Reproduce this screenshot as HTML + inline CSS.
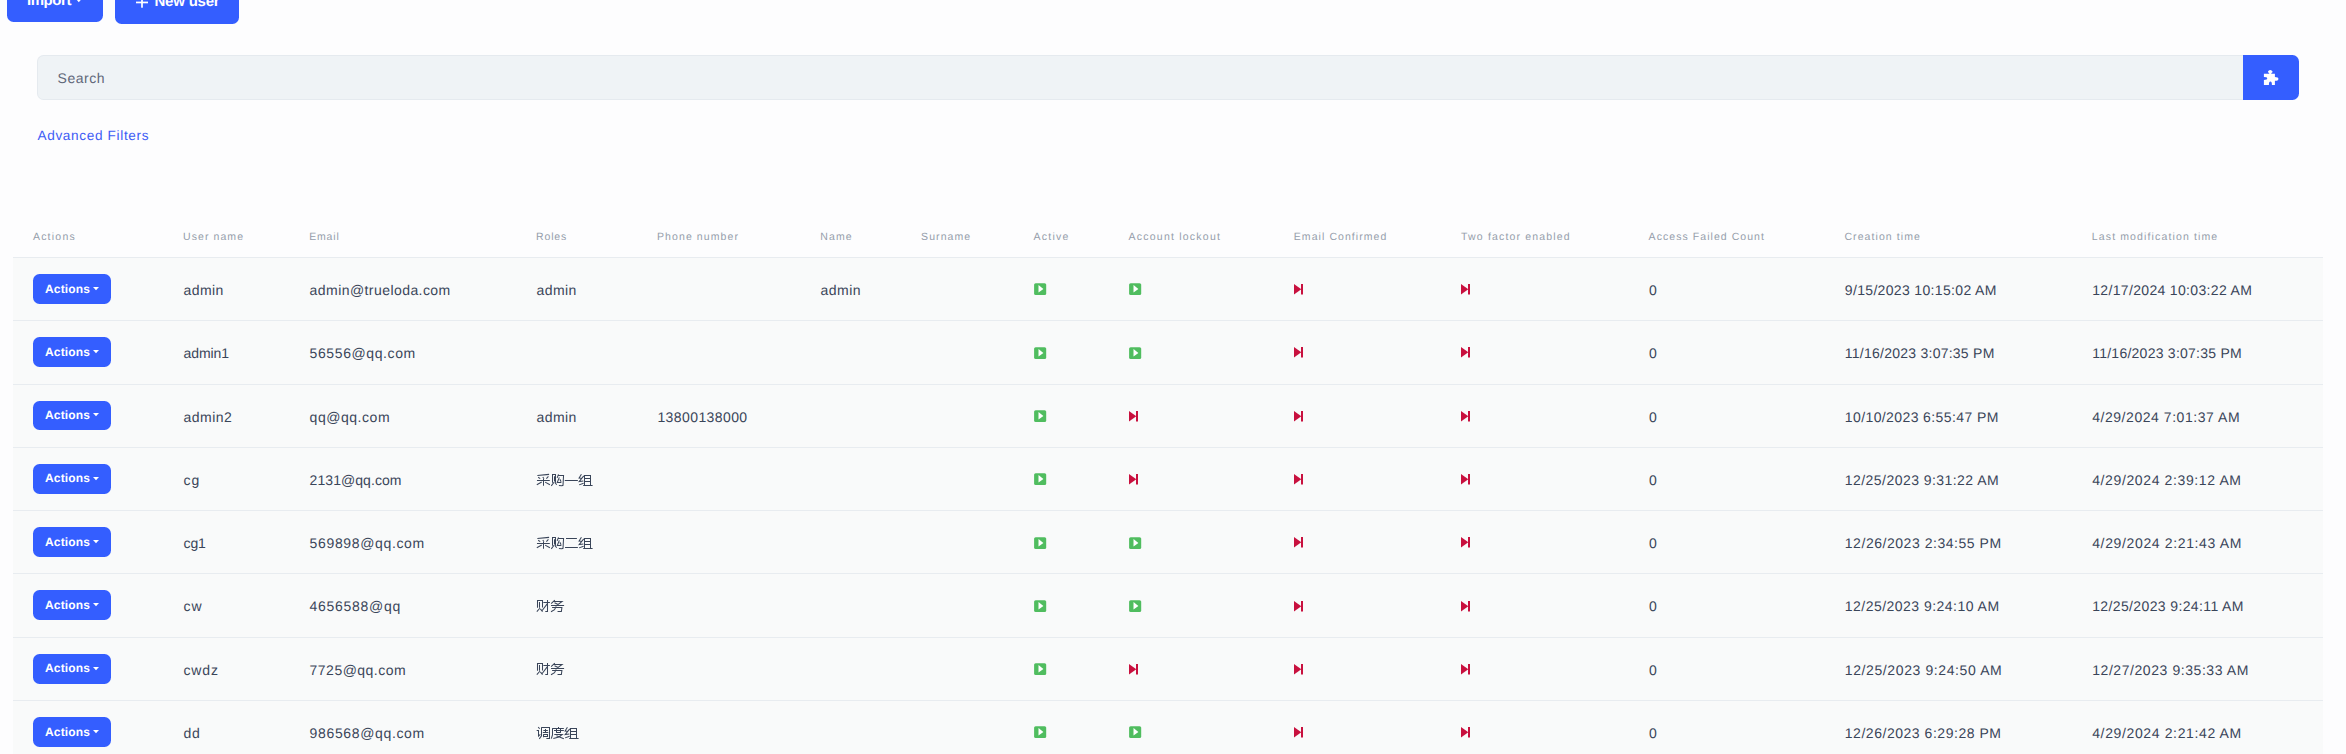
<!DOCTYPE html>
<html><head><meta charset="utf-8">
<style>
html,body{margin:0;padding:0;}
body{text-rendering:geometricPrecision;width:2346px;height:754px;overflow:hidden;position:relative;background:#fdfdfe;font-family:"Liberation Sans",sans-serif;}
.a{position:absolute;white-space:nowrap;}
.btn{position:absolute;background:#345eff;border-radius:6.5px;color:#fff;font-weight:bold;}
.hd{position:absolute;white-space:nowrap;font-size:10.5px;line-height:14px;letter-spacing:1.1px;color:#959dab;}
.td{position:absolute;white-space:nowrap;font-size:14px;line-height:20px;letter-spacing:0.35px;color:#3a4559;}
.ic{position:absolute;display:block;}
.row{position:absolute;left:13px;width:2310px;background:#f9fafa;}
.line{position:absolute;left:13px;width:2310px;height:1px;background:#e8ecf0;}
.caret{position:absolute;width:0;height:0;border-left:3px solid transparent;border-right:3px solid transparent;border-top:3px solid #fff;}
</style></head><body>

<div class="btn" style="left:7px;top:-14px;width:96px;height:36px;"></div>
<div class="a" style="left:27px;top:-8px;font-size:15px;line-height:18px;color:#fff;font-weight:bold;letter-spacing:-0.45px;">Import</div>
<svg class="ic" style="left:75.9px;top:-0.8px" width="6" height="4" viewBox="0 0 6 4"><path d="M0 0 H5.6 L2.8 3.2 Z" fill="#fff"/></svg>
<div class="btn" style="left:115px;top:-14px;width:124px;height:38px;"></div>
<svg class="ic" style="left:136px;top:-3.8px" width="12" height="12" viewBox="0 0 12 12"><rect x="0" y="5.6" width="12" height="1.7" fill="#fff"/><rect x="5.15" y="0" width="1.7" height="11.7" fill="#fff"/></svg>
<div class="a" style="left:154.5px;top:-7.1px;font-size:15px;line-height:18px;color:#fff;font-weight:bold;letter-spacing:-0.22px;">New user</div>
<div class="a" style="left:37px;top:55px;width:2206px;height:45px;box-sizing:border-box;background:#eff3f6;border:1px solid #e5eaef;border-right:0;border-radius:6.5px 0 0 6.5px;"></div>
<div class="a" style="left:57.6px;top:68px;font-size:14px;line-height:20px;letter-spacing:0.5px;color:#5f6779;">Search</div>
<div class="a" style="left:2243px;top:55px;width:56px;height:45px;background:#345eff;border-radius:0 6.5px 6.5px 0;"></div>
<svg class="ic" style="left:2262px;top:68px" width="20" height="20" viewBox="0 0 20 20"><path fill="#fff" d="M1.9 5.8 H7.18 V4.9 A2.15 1.5 0 1 1 9.32 4.9 V5.8 H12.9 V9.0 A3.5 1.9 0 0 1 12.9 12.8 V16.9 H9.9 A1.5 3.3 0 0 0 6.9 16.9 H1.9 V12 A3.3 1.45 0 0 0 1.9 9.1 Z"/></svg>
<div class="a" style="left:37.5px;top:125.8px;font-size:13.6px;line-height:20px;letter-spacing:0.65px;color:#3d5cf5;">Advanced Filters</div>
<div class="hd" style="left:32.90px;top:230.2px;letter-spacing:1.231px">Actions</div>
<div class="hd" style="left:183.10px;top:230.2px;letter-spacing:1.067px">User name</div>
<div class="hd" style="left:309.20px;top:230.2px;letter-spacing:0.819px">Email</div>
<div class="hd" style="left:536.10px;top:230.2px;letter-spacing:0.822px">Roles</div>
<div class="hd" style="left:657.00px;top:230.2px;letter-spacing:1.098px">Phone number</div>
<div class="hd" style="left:820.20px;top:230.2px;letter-spacing:1.135px">Name</div>
<div class="hd" style="left:921.10px;top:230.2px;letter-spacing:1.073px">Surname</div>
<div class="hd" style="left:1033.60px;top:230.2px;letter-spacing:1.251px">Active</div>
<div class="hd" style="left:1128.60px;top:230.2px;letter-spacing:1.225px">Account lockout</div>
<div class="hd" style="left:1293.80px;top:230.2px;letter-spacing:1.068px">Email Confirmed</div>
<div class="hd" style="left:1461.10px;top:230.2px;letter-spacing:1.168px">Two factor enabled</div>
<div class="hd" style="left:1648.60px;top:230.2px;letter-spacing:1.058px">Access Failed Count</div>
<div class="hd" style="left:1844.40px;top:230.2px;letter-spacing:1.080px">Creation time</div>
<div class="hd" style="left:2091.80px;top:230.2px;letter-spacing:1.134px">Last modification time</div>
<div class="row" style="top:257.00px;height:63.29px;"></div>
<div class="line" style="top:257px;"></div>
<div class="btn" style="left:33.2px;top:274.00px;width:77.7px;height:29.8px;"></div>
<div class="a" style="left:45px;top:278.60px;font-size:12px;line-height:20px;color:#fff;font-weight:bold;letter-spacing:0.15px;">Actions</div>
<svg class="ic" style="left:93.2px;top:286.80px" width="6" height="4" viewBox="0 0 6 4"><path d="M0 0 H6 L3 3.3 Z" fill="#fff"/></svg>
<div class="td" style="left:183.5px;top:280.00px;letter-spacing:0.444px">admin</div>
<div class="td" style="left:309.6px;top:280.00px;letter-spacing:0.434px">admin@trueloda.com</div>
<div class="td" style="left:536.5px;top:280.00px;letter-spacing:0.444px">admin</div>
<div class="td" style="left:820.6px;top:280.00px;letter-spacing:0.444px">admin</div>
<div class="td" style="left:1649px;top:280.00px;letter-spacing:1.047px">0</div>
<div class="td" style="left:1844.8px;top:280.00px;letter-spacing:0.338px">9/15/2023 10:15:02 AM</div>
<div class="td" style="left:2092.2px;top:280.00px;letter-spacing:0.338px">12/17/2024 10:03:22 AM</div>
<svg class="ic" style="left:1033.7px;top:283.4px" width="13" height="13" viewBox="0 0 13 13"><rect x="0.1" y="0.2" width="12.1" height="11.9" rx="1.6" fill="#50bd5f"/><path d="M4.5 2.0 L9.4 5.9 L4.5 9.6 Z" fill="#fff"/></svg>
<svg class="ic" style="left:1128.7px;top:283.4px" width="13" height="13" viewBox="0 0 13 13"><rect x="0.1" y="0.2" width="12.1" height="11.9" rx="1.6" fill="#50bd5f"/><path d="M4.5 2.0 L9.4 5.9 L4.5 9.6 Z" fill="#fff"/></svg>
<svg class="ic" style="left:1294.0px;top:284.1px" width="10" height="11" viewBox="0 0 10 11"><path d="M0 0 L7.3 5.25 L0 10.5 Z" fill="#c8103e"/><rect x="7.0" y="0" width="2.0" height="10.5" fill="#c8103e"/></svg>
<svg class="ic" style="left:1460.9px;top:284.1px" width="10" height="11" viewBox="0 0 10 11"><path d="M0 0 L7.3 5.25 L0 10.5 Z" fill="#c8103e"/><rect x="7.0" y="0" width="2.0" height="10.5" fill="#c8103e"/></svg>
<div class="row" style="top:320.29px;height:63.29px;"></div>
<div class="line" style="top:320px;"></div>
<div class="btn" style="left:33.2px;top:337.29px;width:77.7px;height:29.8px;"></div>
<div class="a" style="left:45px;top:341.89px;font-size:12px;line-height:20px;color:#fff;font-weight:bold;letter-spacing:0.15px;">Actions</div>
<svg class="ic" style="left:93.2px;top:350.09px" width="6" height="4" viewBox="0 0 6 4"><path d="M0 0 H6 L3 3.3 Z" fill="#fff"/></svg>
<div class="td" style="left:183.5px;top:343.29px;letter-spacing:-0.070px">admin1</div>
<div class="td" style="left:309.6px;top:343.29px;letter-spacing:0.600px">56556@qq.com</div>
<div class="td" style="left:1649px;top:343.29px;letter-spacing:1.047px">0</div>
<div class="td" style="left:1844.8px;top:343.29px;letter-spacing:0.249px">11/16/2023 3:07:35 PM</div>
<div class="td" style="left:2092.2px;top:343.29px;letter-spacing:0.249px">11/16/2023 3:07:35 PM</div>
<svg class="ic" style="left:1033.7px;top:346.69px" width="13" height="13" viewBox="0 0 13 13"><rect x="0.1" y="0.2" width="12.1" height="11.9" rx="1.6" fill="#50bd5f"/><path d="M4.5 2.0 L9.4 5.9 L4.5 9.6 Z" fill="#fff"/></svg>
<svg class="ic" style="left:1128.7px;top:346.69px" width="13" height="13" viewBox="0 0 13 13"><rect x="0.1" y="0.2" width="12.1" height="11.9" rx="1.6" fill="#50bd5f"/><path d="M4.5 2.0 L9.4 5.9 L4.5 9.6 Z" fill="#fff"/></svg>
<svg class="ic" style="left:1294.0px;top:347.39000000000004px" width="10" height="11" viewBox="0 0 10 11"><path d="M0 0 L7.3 5.25 L0 10.5 Z" fill="#c8103e"/><rect x="7.0" y="0" width="2.0" height="10.5" fill="#c8103e"/></svg>
<svg class="ic" style="left:1460.9px;top:347.39000000000004px" width="10" height="11" viewBox="0 0 10 11"><path d="M0 0 L7.3 5.25 L0 10.5 Z" fill="#c8103e"/><rect x="7.0" y="0" width="2.0" height="10.5" fill="#c8103e"/></svg>
<div class="row" style="top:383.58px;height:63.29px;"></div>
<div class="line" style="top:384px;"></div>
<div class="btn" style="left:33.2px;top:400.58px;width:77.7px;height:29.8px;"></div>
<div class="a" style="left:45px;top:405.18px;font-size:12px;line-height:20px;color:#fff;font-weight:bold;letter-spacing:0.15px;">Actions</div>
<svg class="ic" style="left:93.2px;top:413.38px" width="6" height="4" viewBox="0 0 6 4"><path d="M0 0 H6 L3 3.3 Z" fill="#fff"/></svg>
<div class="td" style="left:183.5px;top:406.58px;letter-spacing:0.497px">admin2</div>
<div class="td" style="left:309.6px;top:406.58px;letter-spacing:0.533px">qq@qq.com</div>
<div class="td" style="left:536.5px;top:406.58px;letter-spacing:0.444px">admin</div>
<div class="td" style="left:657.4px;top:406.58px;letter-spacing:0.411px">13800138000</div>
<div class="td" style="left:1649px;top:406.58px;letter-spacing:1.047px">0</div>
<div class="td" style="left:1844.8px;top:406.58px;letter-spacing:0.397px">10/10/2023 6:55:47 PM</div>
<div class="td" style="left:2092.2px;top:406.58px;letter-spacing:0.545px">4/29/2024 7:01:37 AM</div>
<svg class="ic" style="left:1033.7px;top:409.97999999999996px" width="13" height="13" viewBox="0 0 13 13"><rect x="0.1" y="0.2" width="12.1" height="11.9" rx="1.6" fill="#50bd5f"/><path d="M4.5 2.0 L9.4 5.9 L4.5 9.6 Z" fill="#fff"/></svg>
<svg class="ic" style="left:1128.8px;top:410.68px" width="10" height="11" viewBox="0 0 10 11"><path d="M0 0 L7.3 5.25 L0 10.5 Z" fill="#c8103e"/><rect x="7.0" y="0" width="2.0" height="10.5" fill="#c8103e"/></svg>
<svg class="ic" style="left:1294.0px;top:410.68px" width="10" height="11" viewBox="0 0 10 11"><path d="M0 0 L7.3 5.25 L0 10.5 Z" fill="#c8103e"/><rect x="7.0" y="0" width="2.0" height="10.5" fill="#c8103e"/></svg>
<svg class="ic" style="left:1460.9px;top:410.68px" width="10" height="11" viewBox="0 0 10 11"><path d="M0 0 L7.3 5.25 L0 10.5 Z" fill="#c8103e"/><rect x="7.0" y="0" width="2.0" height="10.5" fill="#c8103e"/></svg>
<div class="row" style="top:446.87px;height:63.29px;"></div>
<div class="line" style="top:447px;"></div>
<div class="btn" style="left:33.2px;top:463.87px;width:77.7px;height:29.8px;"></div>
<div class="a" style="left:45px;top:468.47px;font-size:12px;line-height:20px;color:#fff;font-weight:bold;letter-spacing:0.15px;">Actions</div>
<svg class="ic" style="left:93.2px;top:476.67px" width="6" height="4" viewBox="0 0 6 4"><path d="M0 0 H6 L3 3.3 Z" fill="#fff"/></svg>
<div class="td" style="left:183.5px;top:469.87px;letter-spacing:0.898px">cg</div>
<div class="td" style="left:309.6px;top:469.87px;letter-spacing:0.060px">2131@qq.com</div>
<svg class="ic" style="left:533px;top:470px" width="62" height="20" viewBox="0 0 62 20"><path d="M4.36,5.59 L16.09,4.36 M5.18,7.23 L7.23,8.59 M9.82,6.96 L10.91,8.73 M15.41,6.41 L13.37,8.59 M3.96,10.50 L16.78,10.50 M10.50,9.00 L10.50,15.82 M8.73,12.00 L3.82,14.73 M12.14,12.14 L16.91,14.73 M19.50,4.36 L19.50,12.82 M19.09,4.50 L22.50,4.50 L22.50,12.41 M21.50,6.27 L21.50,11.46 M21.00,12.27 L18.28,15.82 M21.82,12.41 L23.73,14.73 M25.50,4.36 L24.14,7.91 M24.82,5.50 L30.55,5.50 L30.01,15.28 L28.91,15.68 L25.91,15.55 M26.32,7.36 L24.28,12.50 L28.37,12.50 M26.87,9.27 L28.10,11.73 M31.78,10.50 L44.87,10.50 M48.42,4.23 L46.10,8.05 L48.28,8.18 M50.74,5.86 L46.24,11.46 L50.33,10.91 M46.10,14.87 L50.60,13.23 M51.50,5.05 L51.50,15.41 M57.50,5.05 L57.50,15.41 M51.69,5.50 L57.28,5.50 M51.69,8.50 L57.28,8.50 M51.69,11.50 L57.28,11.50 M50.19,15.50 L59.60,15.50" fill="none" stroke="#3a4559" stroke-width="1.05" stroke-linejoin="miter"/></svg>
<div class="td" style="left:1649px;top:469.87px;letter-spacing:1.047px">0</div>
<div class="td" style="left:1844.8px;top:469.87px;letter-spacing:0.452px">12/25/2023 9:31:22 AM</div>
<div class="td" style="left:2092.2px;top:469.87px;letter-spacing:0.622px">4/29/2024 2:39:12 AM</div>
<svg class="ic" style="left:1033.7px;top:473.27px" width="13" height="13" viewBox="0 0 13 13"><rect x="0.1" y="0.2" width="12.1" height="11.9" rx="1.6" fill="#50bd5f"/><path d="M4.5 2.0 L9.4 5.9 L4.5 9.6 Z" fill="#fff"/></svg>
<svg class="ic" style="left:1128.8px;top:473.97px" width="10" height="11" viewBox="0 0 10 11"><path d="M0 0 L7.3 5.25 L0 10.5 Z" fill="#c8103e"/><rect x="7.0" y="0" width="2.0" height="10.5" fill="#c8103e"/></svg>
<svg class="ic" style="left:1294.0px;top:473.97px" width="10" height="11" viewBox="0 0 10 11"><path d="M0 0 L7.3 5.25 L0 10.5 Z" fill="#c8103e"/><rect x="7.0" y="0" width="2.0" height="10.5" fill="#c8103e"/></svg>
<svg class="ic" style="left:1460.9px;top:473.97px" width="10" height="11" viewBox="0 0 10 11"><path d="M0 0 L7.3 5.25 L0 10.5 Z" fill="#c8103e"/><rect x="7.0" y="0" width="2.0" height="10.5" fill="#c8103e"/></svg>
<div class="row" style="top:510.16px;height:63.29px;"></div>
<div class="line" style="top:510px;"></div>
<div class="btn" style="left:33.2px;top:527.16px;width:77.7px;height:29.8px;"></div>
<div class="a" style="left:45px;top:531.76px;font-size:12px;line-height:20px;color:#fff;font-weight:bold;letter-spacing:0.15px;">Actions</div>
<svg class="ic" style="left:93.2px;top:539.96px" width="6" height="4" viewBox="0 0 6 4"><path d="M0 0 H6 L3 3.3 Z" fill="#fff"/></svg>
<div class="td" style="left:183.5px;top:533.16px;letter-spacing:-0.099px">cg1</div>
<div class="td" style="left:309.6px;top:533.16px;letter-spacing:0.645px">569898@qq.com</div>
<svg class="ic" style="left:533px;top:533px" width="62" height="20" viewBox="0 0 62 20"><path d="M4.36,5.59 L16.09,4.36 M5.18,7.23 L7.23,8.59 M9.82,6.96 L10.91,8.73 M15.41,6.41 L13.37,8.59 M3.96,10.50 L16.78,10.50 M10.50,9.00 L10.50,15.82 M8.73,12.00 L3.82,14.73 M12.14,12.14 L16.91,14.73 M19.50,4.36 L19.50,12.82 M19.09,4.50 L22.50,4.50 L22.50,12.41 M21.50,6.27 L21.50,11.46 M21.00,12.27 L18.28,15.82 M21.82,12.41 L23.73,14.73 M25.50,4.36 L24.14,7.91 M24.82,5.50 L30.55,5.50 L30.01,15.28 L28.91,15.68 L25.91,15.55 M26.32,7.36 L24.28,12.50 L28.37,12.50 M26.87,9.27 L28.10,11.73 M33.01,5.50 L43.92,5.50 M32.05,14.50 L44.87,14.50 M48.42,4.23 L46.10,8.05 L48.28,8.18 M50.74,5.86 L46.24,11.46 L50.33,10.91 M46.10,14.87 L50.60,13.23 M51.50,5.05 L51.50,15.41 M57.50,5.05 L57.50,15.41 M51.69,5.50 L57.28,5.50 M51.69,8.50 L57.28,8.50 M51.69,11.50 L57.28,11.50 M50.19,15.50 L59.60,15.50" fill="none" stroke="#3a4559" stroke-width="1.05" stroke-linejoin="miter"/></svg>
<div class="td" style="left:1649px;top:533.16px;letter-spacing:1.047px">0</div>
<div class="td" style="left:1844.8px;top:533.16px;letter-spacing:0.539px">12/26/2023 2:34:55 PM</div>
<div class="td" style="left:2092.2px;top:533.16px;letter-spacing:0.640px">4/29/2024 2:21:43 AM</div>
<svg class="ic" style="left:1033.7px;top:536.56px" width="13" height="13" viewBox="0 0 13 13"><rect x="0.1" y="0.2" width="12.1" height="11.9" rx="1.6" fill="#50bd5f"/><path d="M4.5 2.0 L9.4 5.9 L4.5 9.6 Z" fill="#fff"/></svg>
<svg class="ic" style="left:1128.7px;top:536.56px" width="13" height="13" viewBox="0 0 13 13"><rect x="0.1" y="0.2" width="12.1" height="11.9" rx="1.6" fill="#50bd5f"/><path d="M4.5 2.0 L9.4 5.9 L4.5 9.6 Z" fill="#fff"/></svg>
<svg class="ic" style="left:1294.0px;top:537.26px" width="10" height="11" viewBox="0 0 10 11"><path d="M0 0 L7.3 5.25 L0 10.5 Z" fill="#c8103e"/><rect x="7.0" y="0" width="2.0" height="10.5" fill="#c8103e"/></svg>
<svg class="ic" style="left:1460.9px;top:537.26px" width="10" height="11" viewBox="0 0 10 11"><path d="M0 0 L7.3 5.25 L0 10.5 Z" fill="#c8103e"/><rect x="7.0" y="0" width="2.0" height="10.5" fill="#c8103e"/></svg>
<div class="row" style="top:573.45px;height:63.29px;"></div>
<div class="line" style="top:573px;"></div>
<div class="btn" style="left:33.2px;top:590.45px;width:77.7px;height:29.8px;"></div>
<div class="a" style="left:45px;top:595.05px;font-size:12px;line-height:20px;color:#fff;font-weight:bold;letter-spacing:0.15px;">Actions</div>
<svg class="ic" style="left:93.2px;top:603.25px" width="6" height="4" viewBox="0 0 6 4"><path d="M0 0 H6 L3 3.3 Z" fill="#fff"/></svg>
<div class="td" style="left:183.5px;top:596.45px;letter-spacing:1.039px">cw</div>
<div class="td" style="left:309.6px;top:596.45px;letter-spacing:0.713px">4656588@qq</div>
<svg class="ic" style="left:533px;top:596px" width="34" height="20" viewBox="0 0 34 20"><path d="M4.50,4.09 L4.50,11.73 M4.36,4.50 L9.50,4.50 L9.50,11.46 M6.50,6.00 L6.50,11.73 M6.82,12.27 L3.82,15.68 M7.36,12.82 L9.55,15.55 M10.37,6.50 L16.91,6.50 M14.50,4.09 L14.50,15.50 L12.27,15.50 M14.18,7.91 L9.00,14.73 M21.82,4.09 L18.14,7.64 M20.87,5.50 L29.05,5.50 L24.82,8.59 M21.55,6.82 L25.64,8.73 M18.00,9.50 L31.10,9.50 M19.09,11.50 L28.91,11.50 L28.37,15.50 L24.55,15.50 M23.19,10.37 L21.55,13.64 L18.00,15.68" fill="none" stroke="#3a4559" stroke-width="1.05" stroke-linejoin="miter"/></svg>
<div class="td" style="left:1649px;top:596.45px;letter-spacing:1.047px">0</div>
<div class="td" style="left:1844.8px;top:596.45px;letter-spacing:0.474px">12/25/2023 9:24:10 AM</div>
<div class="td" style="left:2092.2px;top:596.45px;letter-spacing:0.374px">12/25/2023 9:24:11 AM</div>
<svg class="ic" style="left:1033.7px;top:599.85px" width="13" height="13" viewBox="0 0 13 13"><rect x="0.1" y="0.2" width="12.1" height="11.9" rx="1.6" fill="#50bd5f"/><path d="M4.5 2.0 L9.4 5.9 L4.5 9.6 Z" fill="#fff"/></svg>
<svg class="ic" style="left:1128.7px;top:599.85px" width="13" height="13" viewBox="0 0 13 13"><rect x="0.1" y="0.2" width="12.1" height="11.9" rx="1.6" fill="#50bd5f"/><path d="M4.5 2.0 L9.4 5.9 L4.5 9.6 Z" fill="#fff"/></svg>
<svg class="ic" style="left:1294.0px;top:600.5500000000001px" width="10" height="11" viewBox="0 0 10 11"><path d="M0 0 L7.3 5.25 L0 10.5 Z" fill="#c8103e"/><rect x="7.0" y="0" width="2.0" height="10.5" fill="#c8103e"/></svg>
<svg class="ic" style="left:1460.9px;top:600.5500000000001px" width="10" height="11" viewBox="0 0 10 11"><path d="M0 0 L7.3 5.25 L0 10.5 Z" fill="#c8103e"/><rect x="7.0" y="0" width="2.0" height="10.5" fill="#c8103e"/></svg>
<div class="row" style="top:636.74px;height:63.29px;"></div>
<div class="line" style="top:637px;"></div>
<div class="btn" style="left:33.2px;top:653.74px;width:77.7px;height:29.8px;"></div>
<div class="a" style="left:45px;top:658.34px;font-size:12px;line-height:20px;color:#fff;font-weight:bold;letter-spacing:0.15px;">Actions</div>
<svg class="ic" style="left:93.2px;top:666.54px" width="6" height="4" viewBox="0 0 6 4"><path d="M0 0 H6 L3 3.3 Z" fill="#fff"/></svg>
<div class="td" style="left:183.5px;top:659.74px;letter-spacing:0.840px">cwdz</div>
<div class="td" style="left:309.6px;top:659.74px;letter-spacing:0.477px">7725@qq.com</div>
<svg class="ic" style="left:533px;top:659px" width="34" height="20" viewBox="0 0 34 20"><path d="M4.50,4.09 L4.50,11.73 M4.36,4.50 L9.50,4.50 L9.50,11.46 M6.50,6.00 L6.50,11.73 M6.82,12.27 L3.82,15.68 M7.36,12.82 L9.55,15.55 M10.37,6.50 L16.91,6.50 M14.50,4.09 L14.50,15.50 L12.27,15.50 M14.18,7.91 L9.00,14.73 M21.82,4.09 L18.14,7.64 M20.87,5.50 L29.05,5.50 L24.82,8.59 M21.55,6.82 L25.64,8.73 M18.00,9.50 L31.10,9.50 M19.09,11.50 L28.91,11.50 L28.37,15.50 L24.55,15.50 M23.19,10.37 L21.55,13.64 L18.00,15.68" fill="none" stroke="#3a4559" stroke-width="1.05" stroke-linejoin="miter"/></svg>
<div class="td" style="left:1649px;top:659.74px;letter-spacing:1.047px">0</div>
<div class="td" style="left:1844.8px;top:659.74px;letter-spacing:0.608px">12/25/2023 9:24:50 AM</div>
<div class="td" style="left:2092.2px;top:659.74px;letter-spacing:0.568px">12/27/2023 9:35:33 AM</div>
<svg class="ic" style="left:1033.7px;top:663.14px" width="13" height="13" viewBox="0 0 13 13"><rect x="0.1" y="0.2" width="12.1" height="11.9" rx="1.6" fill="#50bd5f"/><path d="M4.5 2.0 L9.4 5.9 L4.5 9.6 Z" fill="#fff"/></svg>
<svg class="ic" style="left:1128.8px;top:663.84px" width="10" height="11" viewBox="0 0 10 11"><path d="M0 0 L7.3 5.25 L0 10.5 Z" fill="#c8103e"/><rect x="7.0" y="0" width="2.0" height="10.5" fill="#c8103e"/></svg>
<svg class="ic" style="left:1294.0px;top:663.84px" width="10" height="11" viewBox="0 0 10 11"><path d="M0 0 L7.3 5.25 L0 10.5 Z" fill="#c8103e"/><rect x="7.0" y="0" width="2.0" height="10.5" fill="#c8103e"/></svg>
<svg class="ic" style="left:1460.9px;top:663.84px" width="10" height="11" viewBox="0 0 10 11"><path d="M0 0 L7.3 5.25 L0 10.5 Z" fill="#c8103e"/><rect x="7.0" y="0" width="2.0" height="10.5" fill="#c8103e"/></svg>
<div class="row" style="top:700.03px;height:63.29px;"></div>
<div class="line" style="top:700px;"></div>
<div class="btn" style="left:33.2px;top:717.03px;width:77.7px;height:29.8px;"></div>
<div class="a" style="left:45px;top:721.63px;font-size:12px;line-height:20px;color:#fff;font-weight:bold;letter-spacing:0.15px;">Actions</div>
<svg class="ic" style="left:93.2px;top:729.83px" width="6" height="4" viewBox="0 0 6 4"><path d="M0 0 H6 L3 3.3 Z" fill="#fff"/></svg>
<div class="td" style="left:183.5px;top:723.03px;letter-spacing:0.789px">dd</div>
<div class="td" style="left:309.6px;top:723.03px;letter-spacing:0.645px">986568@qq.com</div>
<svg class="ic" style="left:533px;top:723px" width="48" height="20" viewBox="0 0 48 20"><path d="M5.18,4.09 L6.68,5.73 M3.68,7.50 L5.50,7.50 L5.50,13.09 L7.36,11.46 M8.50,4.36 L8.50,12.82 L6.27,15.82 M8.46,4.50 L16.50,4.50 L16.50,15.50 L13.37,15.50 M10.37,7.50 L14.87,7.50 M12.50,6.00 L12.50,9.27 M9.82,9.50 L15.28,9.50 M10.50,11.18 L10.50,14.18 M10.50,11.50 L14.50,11.50 L14.50,13.91 M10.50,13.50 L14.18,13.50 M25.50,3.96 L25.50,5.05 M19.37,5.50 L30.82,5.50 M19.50,5.18 L19.50,12.00 L18.28,15.68 M21.00,7.50 L30.82,7.50 M23.50,6.00 L23.50,9.41 M27.50,6.00 L27.50,9.41 M23.19,9.50 L27.82,9.50 M21.28,11.50 L29.19,11.50 L25.91,13.91 L20.32,15.55 M23.46,12.82 L30.82,15.68 M34.42,4.23 L32.11,8.05 L34.29,8.18 M36.74,5.86 L32.24,11.46 L36.33,10.91 M32.11,14.87 L36.61,13.23 M37.50,5.05 L37.50,15.41 M43.50,5.05 L43.50,15.41 M37.70,5.50 L43.29,5.50 M37.70,8.50 L43.29,8.50 M37.70,11.50 L43.29,11.50 M36.20,15.50 L45.61,15.50" fill="none" stroke="#3a4559" stroke-width="1.05" stroke-linejoin="miter"/></svg>
<div class="td" style="left:1649px;top:723.03px;letter-spacing:1.047px">0</div>
<div class="td" style="left:1844.8px;top:723.03px;letter-spacing:0.532px">12/26/2023 6:29:28 PM</div>
<div class="td" style="left:2092.2px;top:723.03px;letter-spacing:0.634px">4/29/2024 2:21:42 AM</div>
<svg class="ic" style="left:1033.7px;top:726.43px" width="13" height="13" viewBox="0 0 13 13"><rect x="0.1" y="0.2" width="12.1" height="11.9" rx="1.6" fill="#50bd5f"/><path d="M4.5 2.0 L9.4 5.9 L4.5 9.6 Z" fill="#fff"/></svg>
<svg class="ic" style="left:1128.7px;top:726.43px" width="13" height="13" viewBox="0 0 13 13"><rect x="0.1" y="0.2" width="12.1" height="11.9" rx="1.6" fill="#50bd5f"/><path d="M4.5 2.0 L9.4 5.9 L4.5 9.6 Z" fill="#fff"/></svg>
<svg class="ic" style="left:1294.0px;top:727.13px" width="10" height="11" viewBox="0 0 10 11"><path d="M0 0 L7.3 5.25 L0 10.5 Z" fill="#c8103e"/><rect x="7.0" y="0" width="2.0" height="10.5" fill="#c8103e"/></svg>
<svg class="ic" style="left:1460.9px;top:727.13px" width="10" height="11" viewBox="0 0 10 11"><path d="M0 0 L7.3 5.25 L0 10.5 Z" fill="#c8103e"/><rect x="7.0" y="0" width="2.0" height="10.5" fill="#c8103e"/></svg>
</body></html>
